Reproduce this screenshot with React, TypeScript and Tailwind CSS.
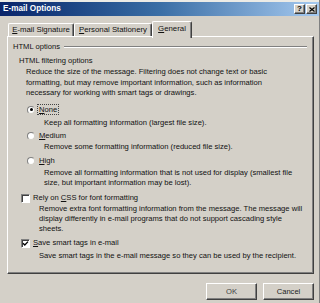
import React from 'react'

const raised =
  'border border-t-white border-l-white border-r-[#404040] border-b-[#404040] shadow-[inset_-1px_-1px_0_#808080]'

function TitleButton({ children }: { children: React.ReactNode }) {
  return (
    <div
      className={`w-[11px] h-[10px] bg-[#D4D0C8] flex items-center justify-center text-[8px] font-bold leading-none text-black ${raised}`}
    >
      {children}
    </div>
  )
}

function Radio({ checked }: { checked?: boolean }) {
  return (
    <div className="w-[8px] h-[8px] rounded-full bg-white border border-t-[#808080] border-l-[#808080] border-r-[#D4D0C8] border-b-[#D4D0C8] flex items-center justify-center shrink-0">
      {checked && <div className="w-[3px] h-[3px] rounded-full bg-black" />}
    </div>
  )
}

function Check({ checked }: { checked?: boolean }) {
  return (
    <div className="w-[9px] h-[9px] bg-white border border-t-[#808080] border-l-[#808080] border-r-white border-b-white shadow-[inset_1px_1px_0_#404040] flex items-center justify-center shrink-0">
      {checked && (
        <svg width="7" height="7" viewBox="0 0 7 7">
          <path d="M1 3.2 L2.8 5 L6 1.6" stroke="#000" strokeWidth="1.3" fill="none" />
        </svg>
      )}
    </div>
  )
}

function Tab({ children, active, width }: { children: React.ReactNode; active?: boolean; width: string }) {
  return (
    <div
      className={`${width} ${
        active ? 'h-[17px] -mb-[2px] z-10 pb-[2px]' : 'h-[13px]'
      } bg-[#D4D0C8] border-t border-l border-r border-t-white border-l-white border-r-[#404040] rounded-t-[2px] shadow-[inset_-1px_0_0_#808080] flex items-center justify-center text-[7.8px] leading-none`}
    >
      {children}
    </div>
  )
}

export default function App() {
  return (
    <div
      className="w-[320px] h-[303px] bg-[#D4D0C8] overflow-hidden flex flex-col text-[#111] border-r border-r-[#808080]"
      style={{ fontFamily: '"Liberation Sans", Arial, sans-serif' }}
    >
      <div className="h-[2px] bg-[#ecebe6]" />

      {/* title bar */}
      <div className="h-[14px] bg-gradient-to-r from-[#0A246A] via-[#3a6ea5] to-[#A6CAF0] flex items-center pl-[3px] pr-[2px]">
        <span className="text-white font-bold text-[8.2px] leading-none">E-mail Options</span>
        <div className="ml-auto flex gap-[1px]">
          <TitleButton>?</TitleButton>
          <TitleButton>
            <svg width="6" height="5" viewBox="0 0 6 5">
              <path d="M0.5 0.5 L5.5 4.5 M5.5 0.5 L0.5 4.5" stroke="#000" strokeWidth="1.2" />
            </svg>
          </TitleButton>
        </div>
      </div>

      {/* tabs */}
      <div className="mt-[5px] h-[15px] flex items-end pl-[8px] relative">
        <Tab width="w-[66px]">
          <span>
            <u>E</u>-mail Signature
          </span>
        </Tab>
        <Tab width="w-[78px]">
          <span>
            <u>P</u>ersonal Stationery
          </span>
        </Tab>
        <Tab width="w-[40px]" active>
          <span>
            <u>G</u>eneral
          </span>
        </Tab>
      </div>

      {/* panel */}
      <div className="ml-[7px] w-[307px] h-[238px] border border-t-white border-l-white border-r-[#404040] border-b-[#404040] shadow-[inset_-1px_-1px_0_#808080] text-[7.6px] pt-[5px] pl-[5px] pr-[6px]">
        <div className="h-[10px] flex items-center leading-[10px]">
          <span>HTML options</span>
          <div className="flex-1 ml-[4px] h-[2px] border-t border-t-[#808080] border-b border-b-white" />
        </div>

        <div className="mt-[4px] ml-[6px] leading-[10px]">HTML filtering options</div>

        <div className="mt-[1px] ml-[13px] leading-[10.5px]">
          Reduce the size of the message. Filtering does not change text or basic
          <br />
          formatting, but may remove important information, such as information
          <br />
          necessary for working with smart tags or drawings.
        </div>

        <div className="mt-[6px] ml-[14px] h-[10px] flex items-center gap-[3px]">
          <Radio checked />
          <span className="leading-[9px] outline outline-1 outline-dotted outline-[#444] px-[1px]">
            <u>N</u>one
          </span>
        </div>
        <div className="mt-[3.5px] ml-[31px] leading-[10px]">
          Keep all formatting information (largest file size).
        </div>

        <div className="mt-[3px] ml-[14px] h-[10px] flex items-center gap-[4px]">
          <Radio />
          <span className="leading-[10px]">
            <u>M</u>edium
          </span>
        </div>
        <div className="mt-[1px] ml-[31px] leading-[10px]">
          Remove some formatting information (reduced file size).
        </div>

        <div className="mt-[4px] ml-[14px] h-[10px] flex items-center gap-[4px]">
          <Radio />
          <span className="leading-[10px]">
            <u>H</u>igh
          </span>
        </div>
        <div className="mt-[2px] ml-[31px] leading-[10px]">
          Remove all formatting information that is not used for display (smallest file
          <br />
          size, but important information may be lost).
        </div>

        <div className="mt-[5px] ml-[8px] h-[10px] flex items-center gap-[3px]">
          <Check />
          <span className="leading-[10px]">
            Rely on <u>C</u>SS for font formatting
          </span>
        </div>
        <div className="mt-[1px] ml-[26px] leading-[10px]">
          Remove extra font formatting information from the message. The message will
          <br />
          display differently in e-mail programs that do not support cascading style
          <br />
          sheets.
        </div>

        <div className="mt-[4px] ml-[8px] h-[10px] flex items-center gap-[3px]">
          <Check checked />
          <span className="leading-[10px]">
            <u>S</u>ave smart tags in e-mail
          </span>
        </div>
        <div className="mt-[3px] ml-[26px] leading-[10px]">
          Save smart tags in the e-mail message so they can be used by the recipient.
        </div>
      </div>

      {/* buttons */}
      <div className="mt-[9px] flex justify-end gap-[6px] pr-[5px]">
        <button className={`w-[51px] h-[17px] bg-[#D4D0C8] text-[7.6px] text-[#444] ${raised}`}>OK</button>
        <button className={`w-[51px] h-[17px] bg-[#D4D0C8] text-[7.6px] text-[#222] ${raised}`}>Cancel</button>
      </div>
    </div>
  )
}
